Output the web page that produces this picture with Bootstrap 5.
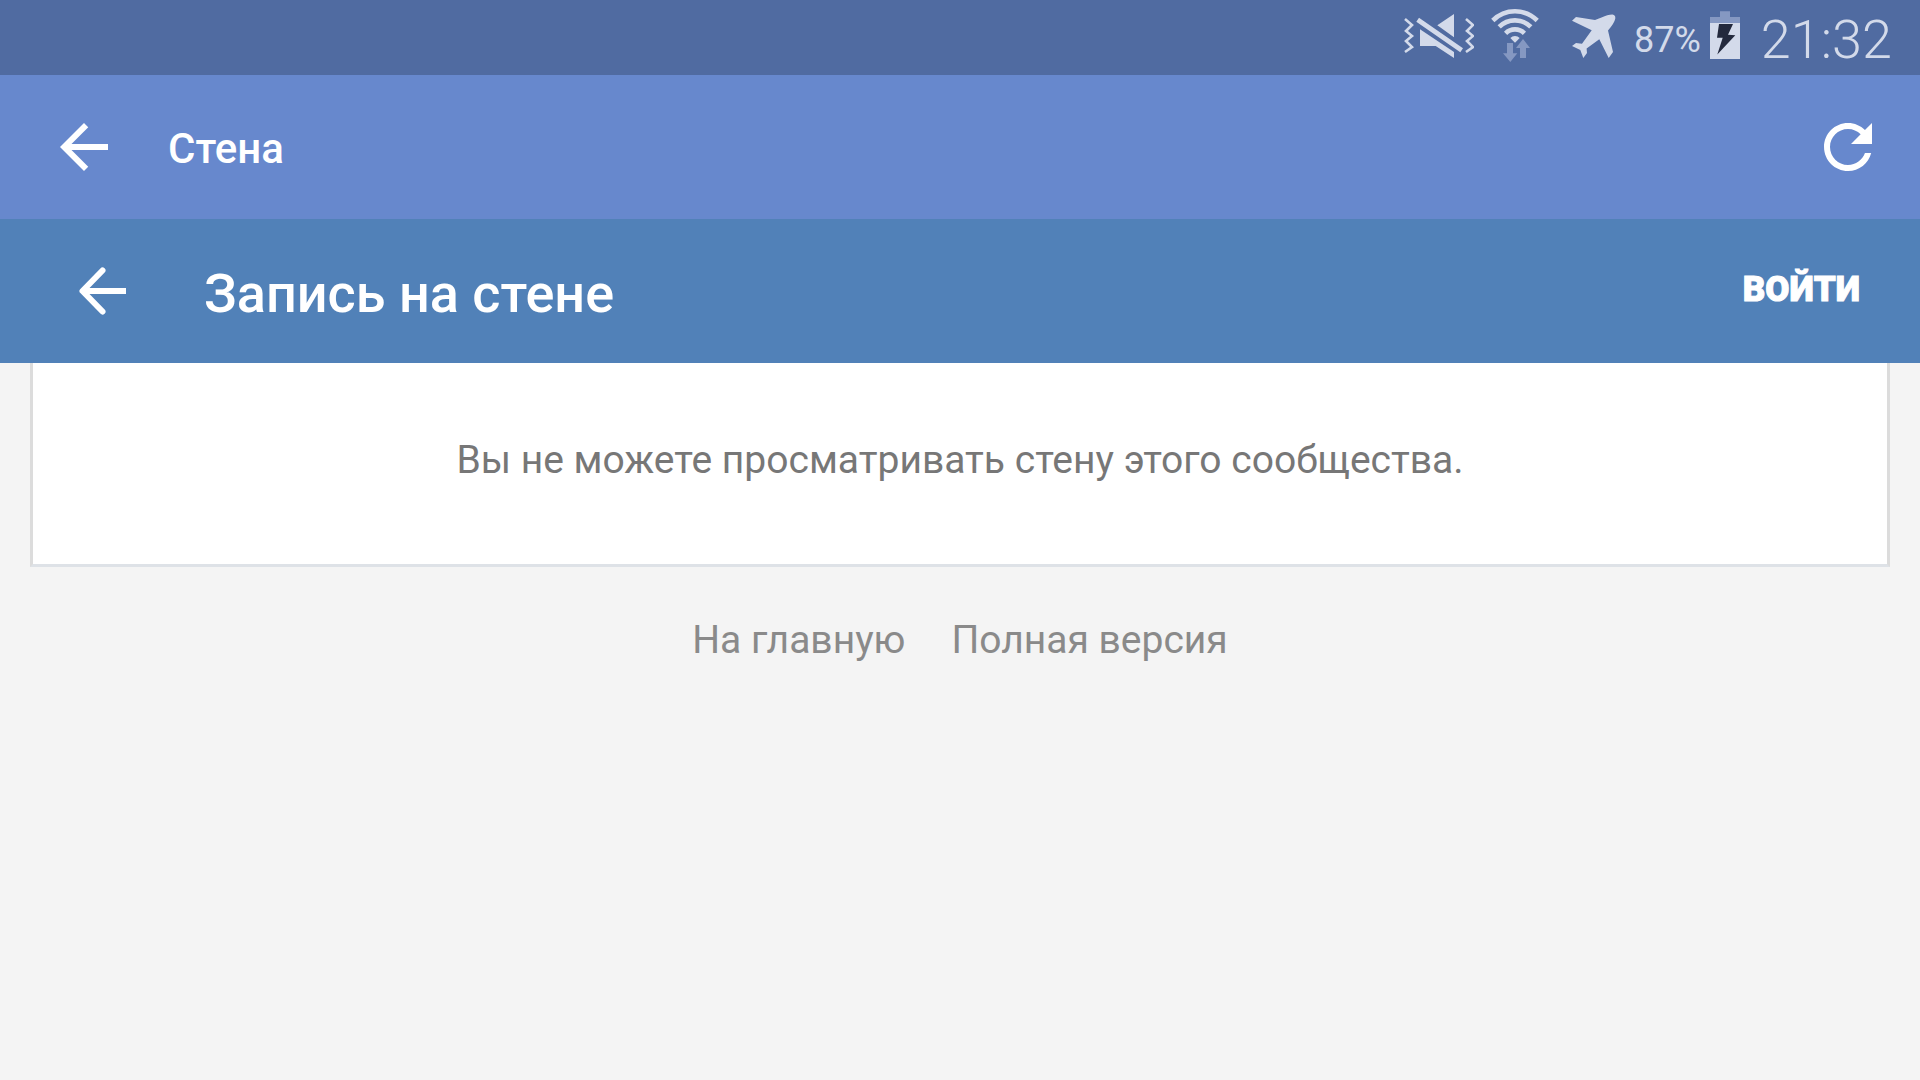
<!DOCTYPE html>
<html lang="ru">
<head>
<meta charset="utf-8">
<meta name="viewport" content="width=device-width, initial-scale=1">
<title>Стена</title>
<link href="https://cdn.jsdelivr.net/npm/bootstrap@5.3.0/dist/css/bootstrap.min.css" rel="stylesheet">
<style>
  body { background: #f4f4f4; font-family: Roboto, "Noto Sans", sans-serif; }
  .status-bar { background: #506ba1; color: #d3daea; height: 75px; padding-right: 28px; line-height: 60px; }
  .status-bar svg { height: 75px; flex: none; }
  .battery-level { font-size: 36px; margin-left: 18px; margin-right: 9px; padding-top: 4px; }
  .clock { font-size: 54px; font-weight: 300; margin-left: 21px; padding-top: 4px; }
  .top-bar { height: 144px; color: #fff; }
  .app-bar { background: #6788cd; padding: 0 36px 0 48px; }
  .site-bar { background: #5181b8; padding: 0 60px 0 66px; }
  .icon-btn { width: 72px; height: 72px; flex: none; line-height: 0; }
  .app-title { font-size: 42px; font-weight: 500; line-height: 60px; margin-left: 48px; padding-top: 4px; }
  .site-title { font-size: 54px; font-weight: 500; line-height: 60px; margin-left: 66px; padding-top: 6px; }
  .login-link { font-size: 35px; font-weight: 900; line-height: 60px; padding-bottom: 2px; -webkit-text-stroke: 1px #fff; }
  .post-panel { margin: 0 30px; border: 3px solid #dcdcdc; border-top: 0; border-bottom-color: #dee2e7; padding: 69px 30px 75px; }
  .body-text { font-size: 39px; line-height: 57px; color: #777; }
  .page-footer { padding-top: 45px; gap: 46px; }
  .page-footer a { color: #8a8a8a; }
</style>
<script src="https://cdn.jsdelivr.net/npm/bootstrap@5.3.0/dist/js/bootstrap.bundle.min.js"></script>
</head>
<body>
<div class="status-bar d-flex justify-content-end align-items-center">
  <svg width="70" viewBox="0 0 70 75" fill="#d3daea" role="img" aria-label="Вибрация">
    <path d="M1 19 8 25 2 31 8 36 2 41 8 47 1 52M62 19 69 25 63 31 69 36 63 41 69 47 62 52" fill="none" stroke="#d3daea" stroke-width="2.6"/>
    <path d="M15 17.7 59 48.3 56.3 52.3 12.3 21.7ZM33.3 25.3 50 14V37.3ZM16 29.3 50 52V58L31.7 46H16Z"/>
  </svg>
  <svg class="ms-3" width="50" viewBox="0 0 50 75" role="img" aria-label="Wi-Fi">
    <path d="M2.8 20.5A31.4 31.4 0 0 1 47.2 20.5M9.2 26.9A22.3 22.3 0 0 1 40.8 26.9M15.6 33.3A13.3 13.3 0 0 1 34.4 33.3" fill="none" stroke="#d3daea" stroke-width="4.6"/>
    <path d="M20.3 38A6.7 6.7 0 0 1 29.7 38L25 42.7Z" fill="#d3daea"/>
    <path d="M17 43H23V53.3H27.3L20.3 62 13 53.3H17ZM33 39 40 48H36V58H30V48H26Z" fill="#8598c2"/>
  </svg>
  <svg class="ms-4" width="52" viewBox="-8 0 52 75" fill="#d3daea" role="img" aria-label="Режим полёта">
    <path d="M0 20.7 4 17 23 20 29.500 17.500Q36 14.5 40.5 14.6 43.6 15 43.3 18.5 42.5 23 36 30.5L41 52 36.7 58 27.3 39.3 14.6 48.5 15 53 11.3 58 8.3 50 0 46 4 43 10 43.7 19.7 30.3Z"/>
  </svg>
  <span class="battery-level">87%</span>
  <svg width="30" viewBox="0 0 30 75" role="img" aria-label="Зарядка">
    <path d="M10 11.3H20V17H30V23H0V17H10Z" fill="#8598c2"/>
    <path d="M0 23H30V59H0Z" fill="#d3daea"/>
    <path d="M9 24H23L18 34.7 25.3 35.3 7.3 54.5 12.7 37.7H7Z" fill="#23293d"/>
  </svg>
  <time class="clock">21:32</time>
</div>

<header class="top-bar app-bar d-flex align-items-center">
  <button type="button" class="icon-btn btn p-0 border-0" aria-label="Назад">
    <svg width="72" height="72" viewBox="0 0 24 24" fill="#fff"><path d="M20 11H7.83l5.59-5.59L12 4l-8 8 8 8 1.41-1.41L7.83 13H20v-2z"/></svg>
  </button>
  <h1 class="app-title mb-0 me-auto">Стена</h1>
  <button type="button" class="icon-btn btn p-0 border-0" aria-label="Обновить">
    <svg width="72" height="72" viewBox="0 0 24 24" fill="#fff"><path d="M17.65 6.35C16.2 4.9 14.21 4 12 4c-4.42 0-7.99 3.58-7.99 8s3.57 8 7.99 8c3.73 0 6.84-2.55 7.73-6h-2.08c-.82 2.33-3.04 4-5.65 4-3.31 0-6-2.69-6-6s2.69-6 6-6c1.66 0 3.14.69 4.22 1.78L13 11h7V4l-2.35 2.35z"/></svg>
  </button>
</header>

<nav class="top-bar site-bar d-flex align-items-center">
  <a href="#" class="icon-btn" aria-label="Назад">
    <svg width="72" height="72" viewBox="0 0 72 72" fill="none" stroke="#fff" stroke-width="6" stroke-linejoin="round"><path d="M60 36H17"/><path d="M36.500 15.500 16.500 36 36.500 56.500" stroke-linecap="round"/></svg>
  </a>
  <h2 class="site-title mb-0 me-auto">Запись на стене</h2>
  <a href="#" class="login-link text-white text-decoration-none">ВОЙТИ</a>
</nav>

<main>
  <section class="post-panel bg-white text-center">
    <p class="body-text mb-0">Вы не можете просматривать стену этого сообщества.</p>
  </section>
</main>
<footer class="page-footer body-text d-flex flex-wrap justify-content-center">
  <a href="#" class="text-decoration-none">На главную</a>
  <a href="#" class="text-decoration-none">Полная версия</a>
</footer>
</body>
</html>
